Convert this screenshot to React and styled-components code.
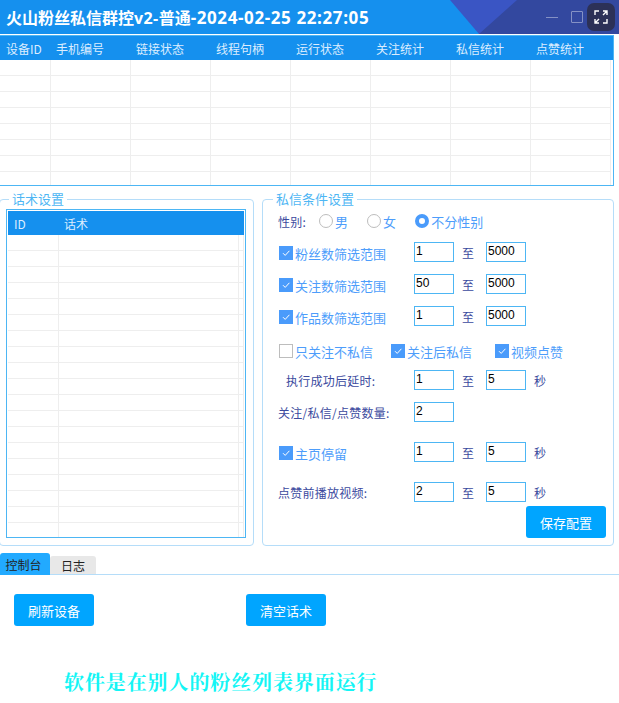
import React from "react";
import styled, { createGlobalStyle } from "styled-components";

const Global = createGlobalStyle`
  html, body { margin: 0; padding: 0; background: #fff; }
  body { font-family: "Noto Sans CJK SC", "Liberation Sans", sans-serif; overflow: hidden; }
  * { box-sizing: border-box; }
`;
const Page = styled.div`width: 619px; height: 703px; overflow: hidden; background: #fff;`;
const TitleBar = styled.header`
  position: relative; height: 34px; background: #1590ee; display: flex; align-items: center; padding-left: 6px; overflow: hidden;
`;
const Title = styled.h1`
  margin: 0; font-size: 16px; font-weight: 700; color: #fff; white-space: nowrap; position: relative;
  font-family: "Open Sans", "Noto Sans CJK SC", sans-serif;
`;
const TitleLatin = styled.span`letter-spacing: ${p => p.$ls}px; font-size: ${p => p.$fs}px;`;
const TitleArt = styled.svg`position: absolute; right: 0; top: 0;`;
const WinControls = styled.div`position: absolute; top: 3px; right: 4px; display: flex; align-items: center;`;
const MinBtn = styled.span`width: 12px; height: 1px; background: rgba(255,255,255,.4); margin-right: 13px;`;
const MaxBtn = styled.span`width: 12px; height: 12px; border: 1px solid rgba(255,255,255,.4); border-radius: 1px; margin-right: 4px;`;
const ExpandBtn = styled.span`width: 28px; height: 28px; border-radius: 7px; background: #2c3157; display: flex; align-items: center; justify-content: center;`;

const DeviceWrap = styled.section`
  width: 614px; height: 151px; margin-top: 1px; border: 1px solid #4db6f4; border-left: 0; overflow: hidden; background: #fff;
`;
const Table = styled.table`
  border-collapse: separate; border-spacing: 0; table-layout: fixed; width: ${p => p.$w}px;
  font-size: 12px;
`;
const Th = styled.th`
  height: 24px; background: #1590ee; color: #dcedff; font-weight: 400; text-align: left; padding: 0 0 0 ${p => p.$pad}px;
  white-space: nowrap; font-size: 12px;
`;
const Td = styled.td`
  height: 16px; padding: 0; border-right: 1px solid #eeeeee; border-bottom: 1px solid #eeeeee;
`;
const SpareTd = styled.td`height: 16px; padding: 0;`;

const Panels = styled.div`display: flex; margin-top: 4px; height: 361px;`;
const Group = styled.fieldset`
  margin: 0; min-width: 0; border: 1px solid #b5ddf9; border-radius: 4px; height: 356px;
  width: ${p => p.$w}px; margin-left: ${p => p.$ml}px; padding: 0;
`;
const Legend = styled.legend`
  color: #4db6f4; font-size: 13px; padding: 0 3px; margin-left: ${p => p.$ml}px; line-height: 18px; height: 18px;
`;
const ScriptBox = styled.div`
  width: 240px; height: 329px; margin: 1px 0 0 6px; border: 1px solid #4db6f4; padding: 1px; overflow: hidden;
`;
const Form = styled.div`padding: 0 0 0 15px; position: relative; height: 338px; margin-top: -1px;`;
const Row = styled.div`
  display: grid; grid-template-columns: 136px 40px 32px 40px 8px auto; align-items: center; height: 20px; margin-top: ${p => p.$mt}px;
  font-size: 12px; color: #3b4a9e;
`;
const Label = styled.span`padding-left: ${p => p.$pl || 0}px; white-space: nowrap; font-size: 12px; letter-spacing: .25px; color: #3b4a9e;`;
const Check = styled.label`display: inline-flex; align-items: center; padding: 3px 0 0 1px; margin-right: ${p => p.$mr || 0}px; color: #4d9dfb; font-size: 13px; white-space: nowrap; line-height: 14px;`;
const Box = styled.span`
  width: 14px; height: 14px; margin: 0 2px 1px 0; display: flex; align-items: center; justify-content: center;
  background: ${p => p.$on ? "#4a9bfb" : "#fff"}; border: ${p => p.$on ? "0" : "1px solid #bdbdbd"};
`;
const Input = styled.div`
  width: 40px; height: 20px; border: 1px solid #4db6f4; color: #000; font: 12px/16px "Liberation Sans", Arial, sans-serif; padding-left: 1px;
`;
const To = styled.span`padding-left: 8px; font-size: 12px; color: #3b4a9e;`;
const Unit = styled.span`font-size: 12px; color: #3b4a9e; grid-column: 6;`;
const GenderRow = styled.div`display: flex; align-items: center; height: 20px; margin-top: 4px; font-size: 13px; color: #3b4a9e;`;
const GenderOptions = styled.div`display: flex; align-items: center; margin-left: 13px;`;
const Radio = styled.label`display: inline-flex; align-items: center; color: #4d9dfb; margin-right: ${p => p.$mr}px;`;
const Dot = styled.span`
  width: 14px; height: 14px; border-radius: 50%; margin-right: 2px;
  border: ${p => p.$on ? "4px solid #4a9bfb" : "1px solid #bdbdbd"}; background: #fff;
`;
const CheckRow = styled.div`display: flex; align-items: center; height: 16px; margin-top: ${p => p.$mt}px;`;
const Btn = styled.button`
  width: 80px; height: 32px; background: #00a5ff; border: 0; border-radius: 3px; color: #fff; font: 13px "Noto Sans CJK SC", sans-serif; padding: 0; cursor: pointer;
`;
const SaveSlot = styled.div`position: absolute; right: 7px; top: 295px;`;

const Tabs = styled.nav`display: flex; align-items: flex-end; height: 22px; margin-top: 2px; border-bottom: 1px solid #b5ddf9;`;
const Tab = styled.span`
  display: flex; align-items: center; justify-content: center; font-size: 12px; color: #222; border-radius: 3px 3px 0 0;
  width: ${p => p.$w}px; height: ${p => p.$active ? 22 : 18}px; margin-bottom: ${p => p.$active ? -1 : 0}px;
  padding-right: ${p => p.$active ? 3 : 0}px;
  background: ${p => p.$active ? "#22aaff" : "#e8e8e8"};
`;
const Actions = styled.div`display: flex; gap: 152px; padding: 19px 0 0 14px;`;
const Notice = styled.p`
  margin: 37px 0 0 64px; font: 700 20px/38px "Noto Serif CJK SC", "Noto Sans CJK SC", serif; color: #14f5f5; letter-spacing: .9px; white-space: nowrap;
`;

const Tick = () => (
  <svg width="10" height="10" viewBox="0 0 10 10"><path d="M2 5.2 4.2 7.4 8.4 2.8" fill="none" stroke="#fff" strokeWidth="1" /></svg>
);
const CheckItem = ({ on = true, children, mr }) => (
  <Check $mr={mr}><Box $on={on}>{on && <Tick />}</Box>{children}</Check>
);
const devCols = [["设备ID", 51, 6], ["手机编号", 80, 5], ["链接状态", 80, 5], ["线程句柄", 80, 5], ["运行状态", 80, 5], ["关注统计", 80, 5], ["私信统计", 80, 5], ["点赞统计", 80, 5]];
const devRows = Array.from({ length: 8 });
const scriptRows = Array.from({ length: 19 });

const RangeRow = ({ mt, label, a, b, unit }) => (
  <Row $mt={mt}>
    {label}
    <Input>{a}</Input>
    {b !== undefined && <To>至</To>}
    {b !== undefined && <Input>{b}</Input>}
    {unit && <Unit>秒</Unit>}
  </Row>
);

export default function App() {
  return (
    <Page>
      <Global />
      <TitleBar>
        <TitleArt width="169" height="34" viewBox="0 0 169 34">
          <rect x="29" width="140" height="34" fill="#33489f" />
          <path d="M0 0H67L29 34Z" fill="#3a55c4" />
        </TitleArt>
        <Title>火山粉丝私信群控<TitleLatin $ls={.4} $fs={16}>v2-</TitleLatin>普通<TitleLatin $ls={.6} $fs={17}>-2024-02-25 22:27:05</TitleLatin></Title>
        <WinControls>
          <MinBtn /><MaxBtn />
          <ExpandBtn>
            <svg width="14" height="14" viewBox="0 0 14 14" fill="none" stroke="#fff" strokeWidth="1.4">
              <path d="M1 5V1H5M9 1h4v4M13 1 9 5M1 9v4h4M1 13l4-4M13 9v4H9" />
            </svg>
          </ExpandBtn>
        </WinControls>
      </TitleBar>
      <DeviceWrap>
        <Table $w={613}>
          <colgroup>
            {devCols.map(([t, w]) => <col key={t} style={{ width: w }} />)}
            <col style={{ width: 2 }} />
          </colgroup>
          <thead><tr>{devCols.map(([t, , p]) => <Th key={t} $pad={p}>{t}</Th>)}<Th $pad={0} /></tr></thead>
          <tbody>{devRows.map((_, i) => <tr key={i}>{devCols.map(([t]) => <Td key={t} />)}<SpareTd /></tr>)}</tbody>
        </Table>
      </DeviceWrap>
      <Panels>
        <Group $w={255} $ml={-1}>
          <Legend $ml={9}>话术设置</Legend>
          <ScriptBox>
            <Table $w={236}>
              <colgroup><col style={{ width: 51 }} /><col style={{ width: 180 }} /><col style={{ width: 5 }} /></colgroup>
              <thead><tr><Th $pad={6}>ID</Th><Th $pad={5}>话术</Th><Th $pad={0} /></tr></thead>
              <tbody>{scriptRows.map((_, i) => <tr key={i}><Td /><Td /><Td /></tr>)}</tbody>
            </Table>
          </ScriptBox>
        </Group>
        <Group $w={352} $ml={8}>
          <Legend $ml={10}>私信条件设置</Legend>
          <Form>
            <GenderRow>
              <Label>性别:</Label>
              <GenderOptions>
                <Radio $mr={19}><Dot />男</Radio>
                <Radio $mr={19}><Dot />女</Radio>
                <Radio $mr={0}><Dot $on />不分性别</Radio>
              </GenderOptions>
            </GenderRow>
            <RangeRow mt={11} label={<CheckItem>粉丝数筛选范围</CheckItem>} a="1" b="5000" />
            <RangeRow mt={12} label={<CheckItem>关注数筛选范围</CheckItem>} a="50" b="5000" />
            <RangeRow mt={12} label={<CheckItem>作品数筛选范围</CheckItem>} a="1" b="5000" />
            <CheckRow $mt={16}>
              <CheckItem on={false} mr={17}>只关注不私信</CheckItem>
              <CheckItem mr={22}>关注后私信</CheckItem>
              <CheckItem>视频点赞</CheckItem>
            </CheckRow>
            <RangeRow mt={12} label={<Label $pl={8}>执行成功后延时:</Label>} a="1" b="5" unit />
            <RangeRow mt={12} label={<Label>关注/私信/点赞数量:</Label>} a="2" />
            <RangeRow mt={20} label={<CheckItem>主页停留</CheckItem>} a="1" b="5" unit />
            <RangeRow mt={20} label={<Label>点赞前播放视频:</Label>} a="2" b="5" unit />
            <SaveSlot><Btn>保存配置</Btn></SaveSlot>
          </Form>
        </Group>
      </Panels>
      <Tabs>
        <Tab $w={50} $active>控制台</Tab>
        <Tab $w={46}>日志</Tab>
      </Tabs>
      <Actions>
        <Btn>刷新设备</Btn>
        <Btn>清空话术</Btn>
      </Actions>
      <Notice>软件是在别人的粉丝列表界面运行</Notice>
    </Page>
  );
}
